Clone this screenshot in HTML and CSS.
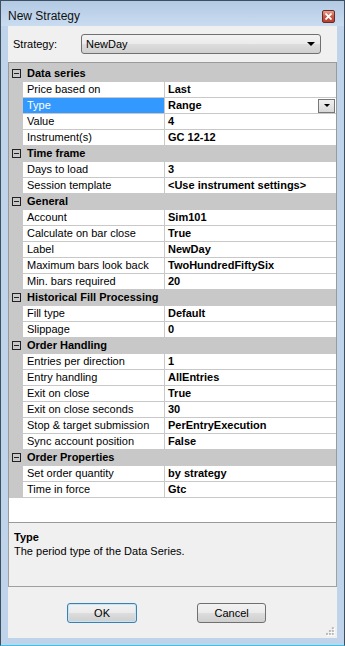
FILE: index.html
```html
<!DOCTYPE html>
<html lang="en">
<head>
  <meta charset="UTF-8" />
  <title>New Strategy</title>
  <link rel="stylesheet" href="styles.css">
</head>
<body>
  <div class="window">
    <div class="titlebar">
      <span class="title">New Strategy</span>
      <span class="close-btn">
        <svg width="7" height="7" viewBox="0 0 7 7"><path d="M0.5 0.5 L6.5 6.5 M6.5 0.5 L0.5 6.5" stroke="#fff" stroke-width="1.8"/></svg>
      </span>
    </div>

    <div class="client">
      <div class="strategy-row">
        <span class="strategy-label">Strategy:</span>
        <div class="combo">
          <span>NewDay</span>
          <span class="combo-arrow"></span>
        </div>
      </div>

      <div class="grid">
        <div class="row cat first"><span class="margin"><span class="expander"></span></span><span class="cat-label">Data series</span></div>
        <div class="row"><span class="margin"></span><span class="name">Price based on</span><span class="value">Last</span></div>
        <div class="row"><span class="margin"></span><span class="name selected">Type</span><span class="value">Range<span class="value-drop"><span class="combo-arrow small"></span></span></span></div>
        <div class="row"><span class="margin"></span><span class="name">Value</span><span class="value">4</span></div>
        <div class="row"><span class="margin"></span><span class="name">Instrument(s)</span><span class="value">GC 12-12</span></div>

        <div class="row cat"><span class="margin"><span class="expander"></span></span><span class="cat-label">Time frame</span></div>
        <div class="row"><span class="margin"></span><span class="name">Days to load</span><span class="value">3</span></div>
        <div class="row"><span class="margin"></span><span class="name">Session template</span><span class="value">&lt;Use instrument settings&gt;</span></div>

        <div class="row cat"><span class="margin"><span class="expander"></span></span><span class="cat-label">General</span></div>
        <div class="row"><span class="margin"></span><span class="name">Account</span><span class="value">Sim101</span></div>
        <div class="row"><span class="margin"></span><span class="name">Calculate on bar close</span><span class="value">True</span></div>
        <div class="row"><span class="margin"></span><span class="name">Label</span><span class="value">NewDay</span></div>
        <div class="row"><span class="margin"></span><span class="name">Maximum bars look back</span><span class="value">TwoHundredFiftySix</span></div>
        <div class="row"><span class="margin"></span><span class="name">Min. bars required</span><span class="value">20</span></div>

        <div class="row cat"><span class="margin"><span class="expander"></span></span><span class="cat-label">Historical Fill Processing</span></div>
        <div class="row"><span class="margin"></span><span class="name">Fill type</span><span class="value">Default</span></div>
        <div class="row"><span class="margin"></span><span class="name">Slippage</span><span class="value">0</span></div>

        <div class="row cat"><span class="margin"><span class="expander"></span></span><span class="cat-label">Order Handling</span></div>
        <div class="row"><span class="margin"></span><span class="name">Entries per direction</span><span class="value">1</span></div>
        <div class="row"><span class="margin"></span><span class="name">Entry handling</span><span class="value">AllEntries</span></div>
        <div class="row"><span class="margin"></span><span class="name">Exit on close</span><span class="value">True</span></div>
        <div class="row"><span class="margin"></span><span class="name">Exit on close seconds</span><span class="value">30</span></div>
        <div class="row"><span class="margin"></span><span class="name">Stop &amp; target submission</span><span class="value">PerEntryExecution</span></div>
        <div class="row"><span class="margin"></span><span class="name">Sync account position</span><span class="value">False</span></div>

        <div class="row cat"><span class="margin"><span class="expander"></span></span><span class="cat-label">Order Properties</span></div>
        <div class="row"><span class="margin"></span><span class="name">Set order quantity</span><span class="value">by strategy</span></div>
        <div class="row"><span class="margin"></span><span class="name">Time in force</span><span class="value">Gtc</span></div>
      </div>

      <div class="desc">
        <div class="desc-title">Type</div>
        <div>The period type of the Data Series.</div>
      </div>

      <div class="buttons">
        <button class="btn default">OK</button>
        <button class="btn">Cancel</button>
        <svg class="grip" width="9" height="9" viewBox="0 0 9 9">
          <g fill="#fff">
            <rect x="7" y="1" width="2" height="2"/><rect x="4" y="4" width="2" height="2"/><rect x="7" y="4" width="2" height="2"/>
            <rect x="1" y="7" width="2" height="2"/><rect x="4" y="7" width="2" height="2"/><rect x="7" y="7" width="2" height="2"/>
          </g>
          <g fill="#b8b8b8">
            <rect x="6" y="0" width="2" height="2"/><rect x="3" y="3" width="2" height="2"/><rect x="6" y="3" width="2" height="2"/>
            <rect x="0" y="6" width="2" height="2"/><rect x="3" y="6" width="2" height="2"/><rect x="6" y="6" width="2" height="2"/>
          </g>
        </svg>
      </div>
    </div>
  </div>
</body>
</html>
```

FILE: styles.css
```css
:root {
  --frame: #bfd4ea;
  --client: #f0f0f0;
  --line: #c8c8c8;
  --select: #3399ff;
}

body {
  margin: 0;
  padding: 0;
  font-family: "Liberation Sans", Arial, sans-serif;
  font-size: 11px;
  color: #000;
  background: #fff;
}

/* outer window frame */
.window {
  width: 345px;
  height: 646px;
  box-sizing: border-box;
  border: 1px solid #3f4f60;
  border-bottom-color: #35c5e8;
  background: var(--frame);
  display: flex;
  flex-direction: column;
}

.titlebar {
  height: 25px;
  flex-shrink: 0;
  display: flex;
  align-items: flex-end;
  justify-content: space-between;
  padding: 0 9px 3px 7px;
  box-sizing: border-box;
  background: linear-gradient(#b3cae4, #c9dcf0);
}

.title {
  font-size: 12px;
  line-height: 14px;
  color: #111;
}

.close-btn {
  width: 13px;
  height: 13px;
  box-sizing: border-box;
  border: 1px solid #6b2a22;
  border-radius: 2px;
  background: linear-gradient(#e8a08f, #c75a48 50%, #b84030);
  display: flex;
  align-items: center;
  justify-content: center;
}

.client {
  flex: 1;
  margin: 0 7px 7px;
  background: var(--client);
  display: flex;
  flex-direction: column;
}

/* strategy selector */
.strategy-row {
  height: 36px;
  flex-shrink: 0;
  display: flex;
  align-items: center;
  padding-left: 5px;
}

.strategy-label {
  width: 68px;
}

.combo {
  width: 240px;
  height: 20px;
  box-sizing: border-box;
  border: 1px solid #707070;
  border-radius: 3px;
  background: linear-gradient(#f3f3f3, #ebebeb 50%, #dddddd 51%, #cfcfcf);
  display: flex;
  align-items: center;
  justify-content: space-between;
  padding: 0 5px 0 4px;
}

.combo-arrow {
  width: 0;
  height: 0;
  border-left: 4px solid transparent;
  border-right: 4px solid transparent;
  border-top: 4px solid #000;
}

.combo-arrow.small {
  border-left-width: 3px;
  border-right-width: 3px;
  border-top-width: 3px;
}

/* property grid */
.grid {
  height: 461px;
  flex-shrink: 0;
  box-sizing: border-box;
  border: 1px solid #9a9a9a;
  background: #fff;
}

.row {
  display: flex;
  height: 16px;
  box-sizing: border-box;
  border-bottom: 1px solid var(--line);
  line-height: 15px;
  white-space: nowrap;
}

.row.first {
  height: 19px;
  align-items: flex-end;
}

.margin {
  width: 14px;
  flex-shrink: 0;
  background: var(--line);
  display: flex;
  align-items: center;
  height: 15px;
}

.cat {
  background: var(--line);
  font-weight: bold;
}

.cat-label {
  padding-left: 4px;
}

.expander {
  width: 9px;
  height: 9px;
  box-sizing: border-box;
  margin-left: 3px;
  border: 1px solid #222;
  background: linear-gradient(#222, #222) center / 5px 1px no-repeat;
}

.name {
  width: 142px;
  flex-shrink: 0;
  box-sizing: border-box;
  padding-left: 4px;
  border-right: 1px solid var(--line);
  overflow: hidden;
}

.name.selected {
  background: var(--select);
  color: #fff;
}

.value {
  flex: 1;
  padding-left: 3px;
  font-weight: bold;
  display: flex;
  align-items: center;
  justify-content: space-between;
}

.value-drop {
  width: 17px;
  height: 14px;
  box-sizing: border-box;
  border: 1px solid #777;
  background: linear-gradient(#f0f0f0, #d8d8d8);
  display: flex;
  align-items: center;
  justify-content: center;
  margin-right: 1px;
}

/* help pane */
.desc {
  height: 64px;
  flex-shrink: 0;
  box-sizing: border-box;
  border: 1px solid #a0a0a0;
  border-top: none;
  padding: 7px 5px 0;
  line-height: 14px;
}

.desc-title {
  font-weight: bold;
}

.buttons {
  flex: 1;
  display: flex;
  align-items: flex-start;
  padding: 16px 0 0 59px;
  gap: 60px;
}

.btn {
  width: 72px;
  height: 20px;
  box-sizing: border-box;
  padding: 0;
  font-family: "Liberation Sans", Arial, sans-serif;
  font-size: 11px;
  color: #000;
  border: 1px solid #707070;
  border-radius: 3px;
  background: linear-gradient(#f2f2f2, #ebebeb 50%, #dddddd 51%, #cfcfcf);
}

.btn + .btn {
  width: 71px;
}

.btn.default {
  border-color: #3c7fb1;
  box-shadow: inset 0 0 0 1px #c4e5f6;
  background: linear-gradient(#f2f2f2, #ebebeb 50%, #dddddd 51%, #cfcfcf);
}

.grip {
  margin-left: auto;
  align-self: flex-end;
  margin-right: 2px;
  margin-bottom: 2px;
}
```
